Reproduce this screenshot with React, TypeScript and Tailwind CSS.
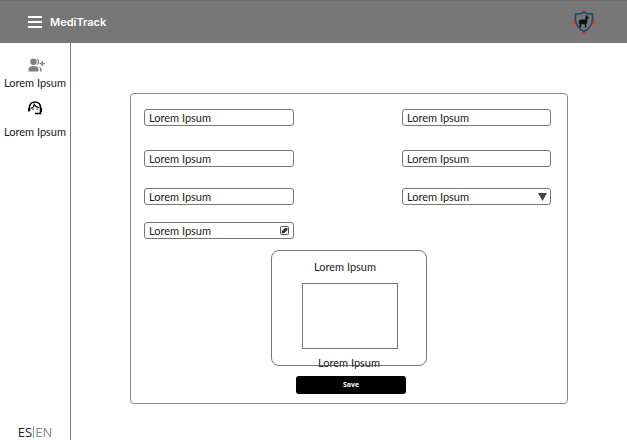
const box =
  "block h-[17px] w-full appearance-none rounded-[3px] border border-[#777] bg-white px-1 text-[11px] leading-[15px] text-[#222] outline-none";

function TextField({ label }: { label: string }) {
  return <input type="text" aria-label={label} defaultValue="Lorem Ipsum" className={box} />;
}

function AddPeople() {
  return (
    <svg viewBox="0 0 17 14" className="ml-1 h-3.5 w-[17px]" fill="#808080" aria-hidden="true">
      <circle cx="5.500" cy="3.800" r="3.200" />
      <path d="M.5 13.500V11C.5 9 3 8 5.500 8s5 1 5 3v2.500z" />
      <path d="M8.800.7c3.200.2 3.200 6 0 6.200 1.300-1.700 1.300-4.500 0-6.200zM10.800 8.500c1.800.5 2.700 1.500 2.700 3v2h-1.500v-2c0-1.300-.4-2.300-1.200-3z" />
      <path d="M13.500 3H15v2h2v1.300h-2V8h-1.500V6.300h-1.700V5h1.700z" />
    </svg>
  );
}

function Support() {
  return (
    <svg viewBox="0 0 16 16" className="size-4" fill="none" stroke="#000" aria-hidden="true">
      <path d="M2.500 11V7.500C2.500 4 5 2 8 2s5.500 2 5.500 5.500v6H8" strokeWidth="1.600" />
      <path d="M1.800 8v3.500M14.300 8v4" strokeWidth="1.600" />
      <path d="M4 8.500C6.200 7.800 7 6.300 7.200 4.500 8.200 6.400 10 7.500 12.200 7.500" strokeWidth="1.200" />
      <path d="M5.500 9.200h1.200M9.500 9.200h1.200" strokeWidth="1.200" />
    </svg>
  );
}

function Shield() {
  return (
    <svg viewBox="0 0 22 24" className="h-6 w-[22px]" aria-hidden="true">
      <path d="M9 .5h4v3H9zM9 20.500h4v3H9zM.5 9.500h3v5h-3zM18.500 9.500h3v5h-3z" fill="#e03532" />
      <path
        d="M11 2.300c2.200 1.400 5 1.800 8.400 1.600.8 8.300-.8 14-8.400 17.600C3.400 17.900 1.800 12.200 2.600 3.900 6 4.100 8.800 3.700 11 2.300z"
        fill="#777"
        stroke="#124a72"
        strokeWidth="1.600"
      />
      <path
        d="M12.600 4.800l.8.900.8-.8.300 1.500 1.500.8-.2 1.200-1.400.2-.1 4.200-1.200 1.500.2 3.200H12l-.4-3.200H8.400L8 17.500H6.400l.2-3.200-1.100-2 .5-1.800 1.600-.9h4.600z"
        fill="#111"
      />
    </svg>
  );
}

export default function App() {
  return (
    <div className="flex min-h-screen flex-col bg-white font-['Lato','Open_Sans',sans-serif] text-[11px] leading-4 text-[#222]">
      <header className="flex h-[43px] items-center justify-between border-t border-[#686868] bg-[#777] pr-8 pl-7 text-white">
        <div className="flex items-center gap-2">
          <button type="button" aria-label="Menu">
            <svg viewBox="0 0 14 12" className="h-3 w-3.5" aria-hidden="true">
              <path d="M0 1h14M0 6h14M0 11h14" stroke="white" strokeWidth="2" />
            </svg>
          </button>
          <h1 className="font-['Inter',sans-serif] font-semibold">MediTrack</h1>
        </div>
        <Shield />
      </header>

      <div className="flex flex-1">
        <nav className="flex w-[71px] shrink-0 flex-col justify-between border-r border-[#777] pt-[15px]">
          <div className="flex flex-col items-center">
            <a href="#patients" className="flex flex-col items-center gap-[3px]">
              <AddPeople />
              <span>Lorem Ipsum</span>
            </a>
            <a href="#support" className="flex flex-col items-center gap-2 pt-[9px]">
              <Support />
              <span>Lorem Ipsum</span>
            </a>
          </div>
          <div className="flex items-center justify-center gap-px font-['Open_Sans',sans-serif] text-[13px] leading-4">
            <button type="button">ES</button>
            <span className="h-3 w-px bg-[#6fa3cf]" />
            <button type="button" className="text-[#888]">EN</button>
          </div>
        </nav>

        <main className="flex-1 px-[59px] pt-[50px] pb-8">
          <form className="rounded-[4px] border border-[#888] px-[13px] pt-[15px] pb-[9px]">
            <div className="flex justify-between pr-[3px]">
              <div className="flex w-[150px] flex-col">
                <div className="pb-6"><TextField label="First name" /></div>
                <div className="pb-[21px]"><TextField label="Last name" /></div>
                <div className="pb-[17px]"><TextField label="Document" /></div>
                <div className="relative">
                  <TextField label="Date" />
                  <button type="button" aria-label="Edit" className="absolute top-1 right-[5px]">
                    <svg viewBox="0 0 9 9" className="size-[9px]" aria-hidden="true">
                      <rect x=".5" y=".5" width="8" height="8" rx="1" fill="none" stroke="#555" />
                      <path d="M1.500 7.500l.5-2.500L5 2h2.500v2L4.500 7z" fill="#333" />
                    </svg>
                  </button>
                </div>
              </div>
              <div className="flex w-[149px] flex-col">
                <div className="pb-6"><TextField label="Email" /></div>
                <div className="pb-[21px]"><TextField label="Phone" /></div>
                <div className="relative">
                  <select aria-label="Type" className={box}>
                    <option>Lorem Ipsum</option>
                  </select>
                  <svg viewBox="0 0 9 8" className="pointer-events-none absolute top-[5px] right-1 h-2 w-[9px]" aria-hidden="true">
                    <path d="M0 0h9L4.500 8z" fill="#444" />
                  </svg>
                </div>
              </div>
            </div>

            <section className="mx-auto mt-[11px] flex h-[116px] w-[156px] flex-col items-center rounded-lg border border-[#777] pt-2">
              <p className="pr-2">Lorem Ipsum</p>
              <div className="mt-2 ml-0.5 h-[66px] w-24 shrink-0 border border-[#777]" />
              <p className="mt-1.5">Lorem Ipsum</p>
            </section>
            <div className="mt-2.5 flex justify-center pl-1">
              <button
                type="submit"
                className="h-[18px] w-[110px] rounded-[3px] bg-black font-['Open_Sans',sans-serif] text-[7px] leading-[18px] font-bold text-white"
              >
                Save
              </button>
            </div>
          </form>
        </main>
      </div>
    </div>
  );
}
